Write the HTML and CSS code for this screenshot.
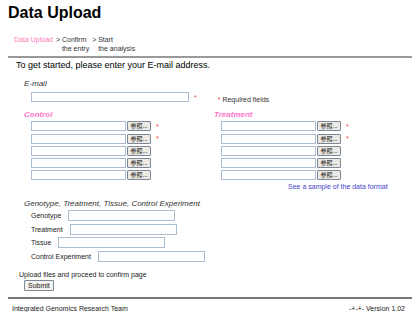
FILE: index.html
```html
<!DOCTYPE html>
<html lang="en">

<head>
    <meta charset="UTF-8">
    <title>Data Upload</title>
    <link rel="stylesheet" href="styles.css">
</head>

<body>
    <h1 class="title">Data Upload</h1>

    <!-- Steps -->
    <div class="steps">
        <span class="step current">Data Upload</span>
        <span class="step">&gt; Confirm<br><span class="sub">the entry</span></span>
        <span class="step">&gt; Start<br><span class="sub">the analysis</span></span>
    </div>
    <hr class="rule">

    <p class="intro">To get started, please enter your E-mail address.</p>

    <form class="upload">
        <div class="label">E-mail</div>
        <div class="row email-row">
            <input type="text" class="field email">
            <span class="req">*</span>
            <span class="note"><span class="req">*</span> Required fields</span>
        </div>

        <div class="groups">
            <div class="group">
                <div class="label pink">Control</div>
                <div class="row"><input type="text" class="field file"><button type="button" class="browse">参照...</button><span class="req">*</span></div>
                <div class="row"><input type="text" class="field file"><button type="button" class="browse">参照...</button><span class="req">*</span></div>
                <div class="row"><input type="text" class="field file"><button type="button" class="browse">参照...</button></div>
                <div class="row"><input type="text" class="field file"><button type="button" class="browse">参照...</button></div>
                <div class="row"><input type="text" class="field file"><button type="button" class="browse">参照...</button></div>
            </div>
            <div class="group">
                <div class="label pink">Treatment</div>
                <div class="row"><input type="text" class="field file"><button type="button" class="browse">参照...</button><span class="req">*</span></div>
                <div class="row"><input type="text" class="field file"><button type="button" class="browse">参照...</button><span class="req">*</span></div>
                <div class="row"><input type="text" class="field file"><button type="button" class="browse">参照...</button></div>
                <div class="row"><input type="text" class="field file"><button type="button" class="browse">参照...</button></div>
                <div class="row"><input type="text" class="field file"><button type="button" class="browse">参照...</button></div>
                <div class="sample"><a href="#">See a sample</a> of the data format</div>
            </div>
        </div>

        <div class="label meta-title">Genotype, Treatment, Tissue, Control Experiment</div>
        <div class="meta">
            <div class="meta-row"><span>Genotype</span><input type="text" class="field meta-field"></div>
            <div class="meta-row"><span>Treatment</span><input type="text" class="field meta-field"></div>
            <div class="meta-row"><span>Tissue</span><input type="text" class="field meta-field"></div>
            <div class="meta-row"><span>Control Experiment</span><input type="text" class="field meta-field"></div>
        </div>

        <p class="proceed">Upload files and proceed to confirm page</p>
        <button type="button" class="submit">Submit</button>
    </form>

    <hr class="rule footer-rule">
    <div class="footer">
        <span>Integrated Genomics Research Team</span>
        <span>-+-+- Version 1.02</span>
    </div>
</body>

</html>
```

FILE: styles.css
```css
body {
    margin: 0 8px;
    font-family: "Liberation Sans", Arial, sans-serif;
    color: #000;
    background: #fff;
}

/* Title */
.title {
    margin: 3px 0 0 0;
    font-size: 16px;
    line-height: 20px;
}

/* Steps */
.steps {
    display: flex;
    gap: 3px;
    margin: 12px 0 0 6px;
    font-size: 7px;
    line-height: 9px;
    color: #333;
}

.step.current {
    color: #f7b;
}

.step .sub {
    padding-left: 6px;
}

.rule {
    margin: 3px 0 0 0;
    border: none;
    border-top: 2px solid #999;
}

.intro {
    margin: 2px 0 0 8px;
    font-size: 9px;
    line-height: 11px;
}

/* Form */
.upload {
    padding-left: 16px;
}

.label {
    font-size: 8px;
    font-style: italic;
    color: #333;
    line-height: 10px;
    margin-top: 8px;
}

.label.pink {
    color: #f7c;
    font-weight: bold;
    margin-top: 7px;
}

.row {
    display: flex;
    align-items: center;
    height: 12.25px;
    padding-left: 7px;
}

.email-row {
    margin-top: 2px;
}

.field {
    box-sizing: border-box;
    border: 1px solid #a9bcd2;
    background: #fff;
    padding: 0;
    margin: 0;
}

.email {
    width: 158px;
    height: 10px;
}

.email-row .note {
    margin-left: 16px;
    font-size: 7px;
    color: #333;
    position: relative;
    top: 2px;
}

.req {
    color: #e44;
    font-size: 7px;
    margin-left: 5px;
}

.groups {
    display: flex;
}

.group {
    width: 190px;
}

.file {
    width: 95px;
    height: 10px;
}

.browse {
    box-sizing: border-box;
    width: 24px;
    height: 10px;
    margin-left: 1px;
    padding: 0;
    border: 1px solid #7a8899;
    border-radius: 1px;
    background: #ece9e3;
    font-family: "Noto Sans CJK JP", sans-serif;
    font-size: 6px;
    line-height: 8px;
    color: #222;
}

.sample {
    margin: 0 0 0 74px;
    font-size: 7px;
    line-height: 9px;
    color: #44c;
}

.sample a {
    color: #44c;
    text-decoration: none;
}

.meta-title {
    margin-top: 8px;
}

.meta {
    padding-left: 7px;
}

.meta-row {
    display: flex;
    align-items: center;
    gap: 7px;
    height: 13.7px;
    font-size: 7px;
    color: #222;
}

.meta-field {
    width: 107px;
    height: 11px;
}

.proceed {
    margin: 7px 0 0 -5px;
    font-size: 7px;
    line-height: 9px;
    color: #222;
}

.submit {
    display: block;
    margin: 1px 0 0 0;
    padding: 0 3px;
    height: 11px;
    font-family: "Liberation Sans", Arial, sans-serif;
    font-size: 7px;
    color: #222;
    border: 1px solid #7a8899;
    border-radius: 1px;
    background: #f4f3ee;
}

.footer-rule {
    margin-top: 6px;
    border-top-color: #777;
}

.footer {
    display: flex;
    justify-content: space-between;
    margin: 6px 7px 0 4px;
    font-size: 7px;
    color: #222;
}
```
